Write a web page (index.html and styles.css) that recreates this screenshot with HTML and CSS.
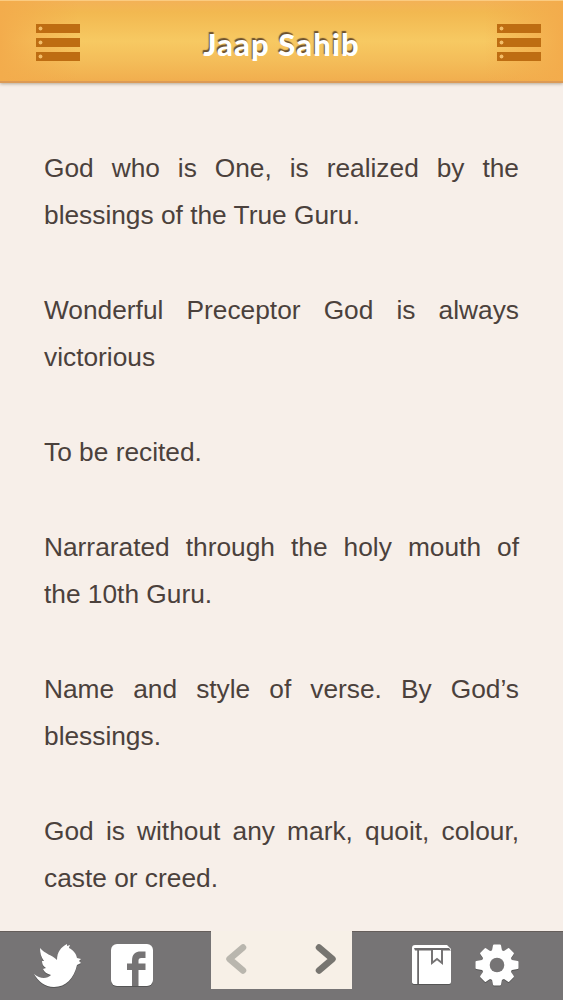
FILE: index.html
```html
<!DOCTYPE html>
<html lang="en">
<head>
    <meta charset="UTF-8">
    <meta name="viewport" content="width=device-width, initial-scale=1.0">
    <title>Jaap Sahib</title>
    <link rel="stylesheet" href="styles.css">
</head>
<body>

    <header class="header">
        <div class="menu">
            <div class="bar"></div>
            <div class="bar"></div>
            <div class="bar"></div>
        </div>
        <h1>Jaap Sahib</h1>
        <div class="menu">
            <div class="bar"></div>
            <div class="bar"></div>
            <div class="bar"></div>
        </div>
    </header>

    <main class="content">
        <p>God who is One, is realized by the blessings of the True Guru.</p>
        <p>Wonderful Preceptor God is always victorious</p>
        <p>To be recited.</p>
        <p>Narrarated through the holy mouth of the 10th Guru.</p>
        <p>Name and style of verse. By God’s blessings.</p>
        <p>God is without any mark, quoit, colour, caste or creed.</p>
    </main>

    <footer class="footer">
        <div class="group share">
            <svg class="icon" width="48" height="44" viewBox="0 0 48 44">
                <path fill="#fff" d="M0 30 C6 35 13 35 17 31 C13 30 10 28 9 25 L12 24 C9 22 8 20 8 17 L10 17 C7 13 6 9 6 4 C11 10 18 11 23 16 C23 8 27 3 33 0 L33 2 L36 1 L35 4 C39 6 42 9 43 14 L47 15 L45 17 L47 19 L43 21 C40 34 32 43 20 43 C11 43 4 37 0 30 Z"/>
            </svg>
            <svg class="icon" width="42" height="42" viewBox="0 0 42 42">
                <rect width="42" height="42" rx="6" fill="#fff"/>
                <path fill="#767475" d="M21 42 V26 H16 V19.500 H21 V17 C21 10 24 7.500 30 7.500 H34.500 V14 H31 C28 14 27.500 15 27.500 17.500 V19.500 H34.500 V26 H27.500 V42 Z"/>
            </svg>
        </div>
        <div class="pager">
            <svg width="22" height="31" viewBox="0 0 22 31">
                <path class="arrow off" d="M17 3.500 L3.500 15 L17 26.500"/>
            </svg>
            <svg width="22" height="31" viewBox="0 0 22 31">
                <path class="arrow" d="M4 3.500 L17.500 15 L4 26.500"/>
            </svg>
        </div>
        <div class="group tools">
            <svg class="icon" width="40" height="40" viewBox="0 0 40 40">
                <path fill="#fff" d="M3 0 H35 L39 4 V37 Q39 39 37 39 H3 Q0 39 0 37 V3 Q0 0 3 0 Z"/>
                <path fill="#6c6a6b" d="M2 3 H37 L39 5.500 H7 V39 H5.200 V5.500 H3 Z"/>
                <path fill="#fff" stroke="#767475" stroke-width="2" d="M20 5 V18 L25 14 L30 18 V5"/>
            </svg>
            <svg class="icon" width="44" height="42" viewBox="-22 -21 44 42">
                <circle r="15.500" fill="#fff"/>
                <g fill="#fff" stroke="#fff" stroke-width="2" stroke-linejoin="round">
                    <path d="M-4.500 -12 L-3 -19.500 H3 L4.500 -12 Z"/>
                    <path transform="rotate(45)" d="M-4.500 -12 L-3 -19.500 H3 L4.500 -12 Z"/>
                    <path transform="rotate(90)" d="M-4.500 -12 L-3 -20.500 H3 L4.500 -12 Z"/>
                    <path transform="rotate(135)" d="M-4.500 -12 L-3 -19.500 H3 L4.500 -12 Z"/>
                    <path transform="rotate(180)" d="M-4.500 -12 L-3 -19.500 H3 L4.500 -12 Z"/>
                    <path transform="rotate(225)" d="M-4.500 -12 L-3 -19.500 H3 L4.500 -12 Z"/>
                    <path transform="rotate(270)" d="M-4.500 -12 L-3 -20.500 H3 L4.500 -12 Z"/>
                    <path transform="rotate(315)" d="M-4.500 -12 L-3 -19.500 H3 L4.500 -12 Z"/>
                </g>
                <circle r="7.300" fill="#767475"/>
            </svg>
        </div>
    </footer>

</body>
</html>
```
FILE: styles.css
```css
* {
    box-sizing: border-box;
}
body {
    margin: 0;
    height: 1000px;
    display: flex;
    flex-direction: column;
    overflow: hidden;
    background-color: #f7efe9;
    color: #4b413c;
    font-family: "Liberation Sans", Arial, sans-serif;
}
.header {
    flex: none;
    display: flex;
    justify-content: space-between;
    align-items: center;
    height: 83px;
    padding: 2px 22px 0 36px;
    background:
        linear-gradient(to right, #f3ac4c, rgba(243, 172, 76, 0) 14%, rgba(243, 172, 76, 0) 86%, #f3ac4c),
        linear-gradient(#f3b257, #f2b850 14%, #f7c962 50%, #f4bd59 75%, #f1ae4e);
    border-top: 1px solid #fbcb80;
    border-bottom: 2px solid #dc9a55;
    box-shadow: 0 1px 3px rgba(120, 100, 70, 0.5);
}
.menu {
    display: flex;
    flex-direction: column;
    gap: 5px;
    width: 44px;
}
.bar {
    height: 9px;
    background: radial-gradient(circle at 4.5px 4.5px, #f3bd68 1.6px, transparent 2.3px), #be6d12;
}
h1 {
    margin: 4px 14px 0 0;
    color: #fff;
    font-family: "Marker Felt", Lato, sans-serif;
    font-size: 31px;
    font-weight: 900;
    line-height: 40px;
    letter-spacing: 1.1px;
    text-shadow: -1px -2px 1px #6b5130;
}
.content {
    flex: 1;
    min-height: 0;
    padding: 62px 44px 0;
    font-size: 26.3px;
    line-height: 47.35px;
    text-align: justify;
}
.content p {
    margin: 0 0 47.35px;
}
.footer {
    flex: none;
    display: flex;
    justify-content: space-between;
    height: 69px;
    background-color: #767475;
    box-shadow: inset 0 1px #655e5b;
}
.group {
    display: flex;
    width: 211px;
}
.icon {
    filter: drop-shadow(0 1px 0.5px #555);
}
.share {
    padding: 13px 0 0 34px;
    gap: 29px;
}
.tools {
    padding: 13px 0 0 60px;
    gap: 23px;
}
.tools .icon:first-child {
    margin-top: 1px;
}
.pager {
    display: flex;
    justify-content: space-between;
    width: 141px;
    height: 58px;
    padding: 13px 15px 0;
    background-color: #f7f0e7;
}
.arrow {
    fill: none;
    stroke: #777570;
    stroke-width: 6.5;
    stroke-linecap: round;
    stroke-linejoin: round;
}
.off {
    stroke: #b9b6ae;
}
```
